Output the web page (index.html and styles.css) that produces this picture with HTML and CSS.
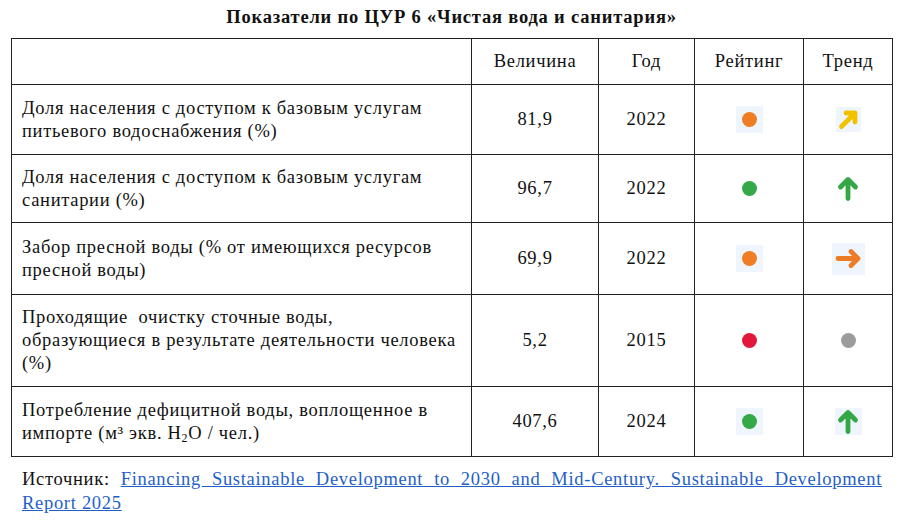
FILE: index.html
```html
<!DOCTYPE html>
<html lang="ru">
<head>
<meta charset="utf-8">
<link rel="stylesheet" href="styles.css">
</head>
<body>
<div class="page">
  <h1 class="title">Показатели по ЦУР 6 «Чистая вода и санитария»</h1>
  <table class="sdg">
    <colgroup>
      <col class="c-name"><col class="c-val"><col class="c-year"><col class="c-rate"><col class="c-trend">
    </colgroup>
    <thead>
      <tr class="r-head"><th></th><th>Величина</th><th>Год</th><th>Рейтинг</th><th>Тренд</th></tr>
    </thead>
    <tbody>
      <tr class="r1">
        <td class="name">Доля населения с доступом к базовым услугам<br>питьевого водоснабжения (%)</td>
        <td>81,9</td><td>2022</td>
        <td><span class="ico bg"><span class="dot orange"></span></span></td>
        <td><span class="ico bg sq25"><svg width="21" height="21" viewBox="0 0 21 21"><path d="M3.5 17.5 L16 5 M8 4 H17 V13" fill="none" stroke="#f2c200" stroke-width="4.8" stroke-linecap="round" stroke-linejoin="round"/></svg></span></td>
      </tr>
      <tr class="r2">
        <td class="name">Доля населения с доступом к базовым услугам<br>санитарии (%)</td>
        <td>96,7</td><td>2022</td>
        <td><span class="ico"><span class="dot green"></span></span></td>
        <td><span class="ico"><svg width="22" height="25" viewBox="0 0 22 25"><path d="M11 22.5 V4.5 M3.5 11 L11 3.5 L18.5 11" fill="none" stroke="#33a646" stroke-width="4.8" stroke-linecap="round" stroke-linejoin="round"/></svg></span></td>
      </tr>
      <tr class="r3">
        <td class="name">Забор пресной воды (% от имеющихся ресурсов<br>пресной воды)</td>
        <td>69,9</td><td>2022</td>
        <td><span class="ico bg"><span class="dot orange"></span></span></td>
        <td><span class="ico bg wide"><svg width="27" height="21" viewBox="0 0 27 21"><path d="M3 10.5 H22 M16 3.5 L23 10.5 L16 17.5" fill="none" stroke="#ee7b25" stroke-width="4.8" stroke-linecap="round" stroke-linejoin="round"/></svg></span></td>
      </tr>
      <tr class="r4">
        <td class="name">Проходящие&nbsp; очистку сточные воды,<br>образующиеся в результате деятельности человека<br>(%)</td>
        <td>5,2</td><td>2015</td>
        <td><span class="ico"><span class="dot red"></span></span></td>
        <td><span class="ico"><span class="dot gray"></span></span></td>
      </tr>
      <tr class="r5">
        <td class="name">Потребление дефицитной воды, воплощенное в<br>импорте (м³ экв. H<sub>2</sub>O / чел.)</td>
        <td>407,6</td><td>2024</td>
        <td><span class="ico bg"><span class="dot green"></span></span></td>
        <td><span class="ico bg"><svg width="22" height="25" viewBox="0 0 22 25"><path d="M11 22.5 V4.5 M3.5 11 L11 3.5 L18.5 11" fill="none" stroke="#33a646" stroke-width="4.8" stroke-linecap="round" stroke-linejoin="round"/></svg></span></td>
      </tr>
    </tbody>
  </table>
  <p class="source"><span class="src-label">Источник:</span> <a href="#">Financing Sustainable Development to 2030 and Mid-Century. Sustainable Development Report 2025</a></p>
</div>
</body>
</html>
```

FILE: styles.css
```css
html, body {
  margin: 0;
  padding: 0;
  background: #ffffff;
}
body {
  font-family: "Liberation Serif", "Times New Roman", serif;
  color: #111;
  font-size: 18.5px;
  letter-spacing: 0.7px;
}
.page {
  width: 881px;
  padding: 0 0 0 11px;
}
.title {
  margin: 0;
  height: 38px;
  box-sizing: border-box;
  padding-top: 6px;
  font-size: 18.5px;
  line-height: 23px;
  font-weight: bold;
  letter-spacing: 0.8px;
  text-align: center;
}
.sdg {
  width: 881px;
  border-collapse: collapse;
  table-layout: fixed;
  border: 1.5px solid #222;
}
.c-name { width: 460px; }
.c-val { width: 127px; }
.c-year { width: 96px; }
.c-rate { width: 109px; }
.c-trend { width: 89px; }
.sdg th, .sdg td {
  border: 1.5px solid #222;
  padding: 0;
  text-align: center;
  vertical-align: middle;
  font-weight: normal;
  line-height: 23px;
}
.sdg td.name {
  text-align: left;
  padding-left: 10px;
  padding-right: 0;
  white-space: nowrap;
}
.r-head { height: 46px; }
.r1 { height: 70px; }
.r2 { height: 68px; }
.r3 { height: 72px; }
.r4 { height: 92px; }
.r5 { height: 70px; }
sub {
  font-size: 12px;
  line-height: 0;
  vertical-align: -3px;
}
.ico {
  display: inline-flex;
  align-items: center;
  justify-content: center;
  width: 27px;
  height: 27px;
  vertical-align: middle;
}
.ico.sq25 { width: 25px; height: 25px; }
.ico.wide { width: 33px; height: 32px; }
.ico.bg { background: #eff5fd; }
.dot {
  display: block;
  width: 15px;
  height: 15px;
  border-radius: 50%;
}
.orange { background: #ee7d23; }
.green { background: #35a847; }
.red { background: #e3173a; }
.gray { background: #9c9c9e; }
.source {
  margin: 0;
  padding: 10px 10px 0 11px;
  line-height: 24px;
  text-align: justify;
}
.source a {
  color: #1f5fc7;
  text-decoration: underline;
}
```
